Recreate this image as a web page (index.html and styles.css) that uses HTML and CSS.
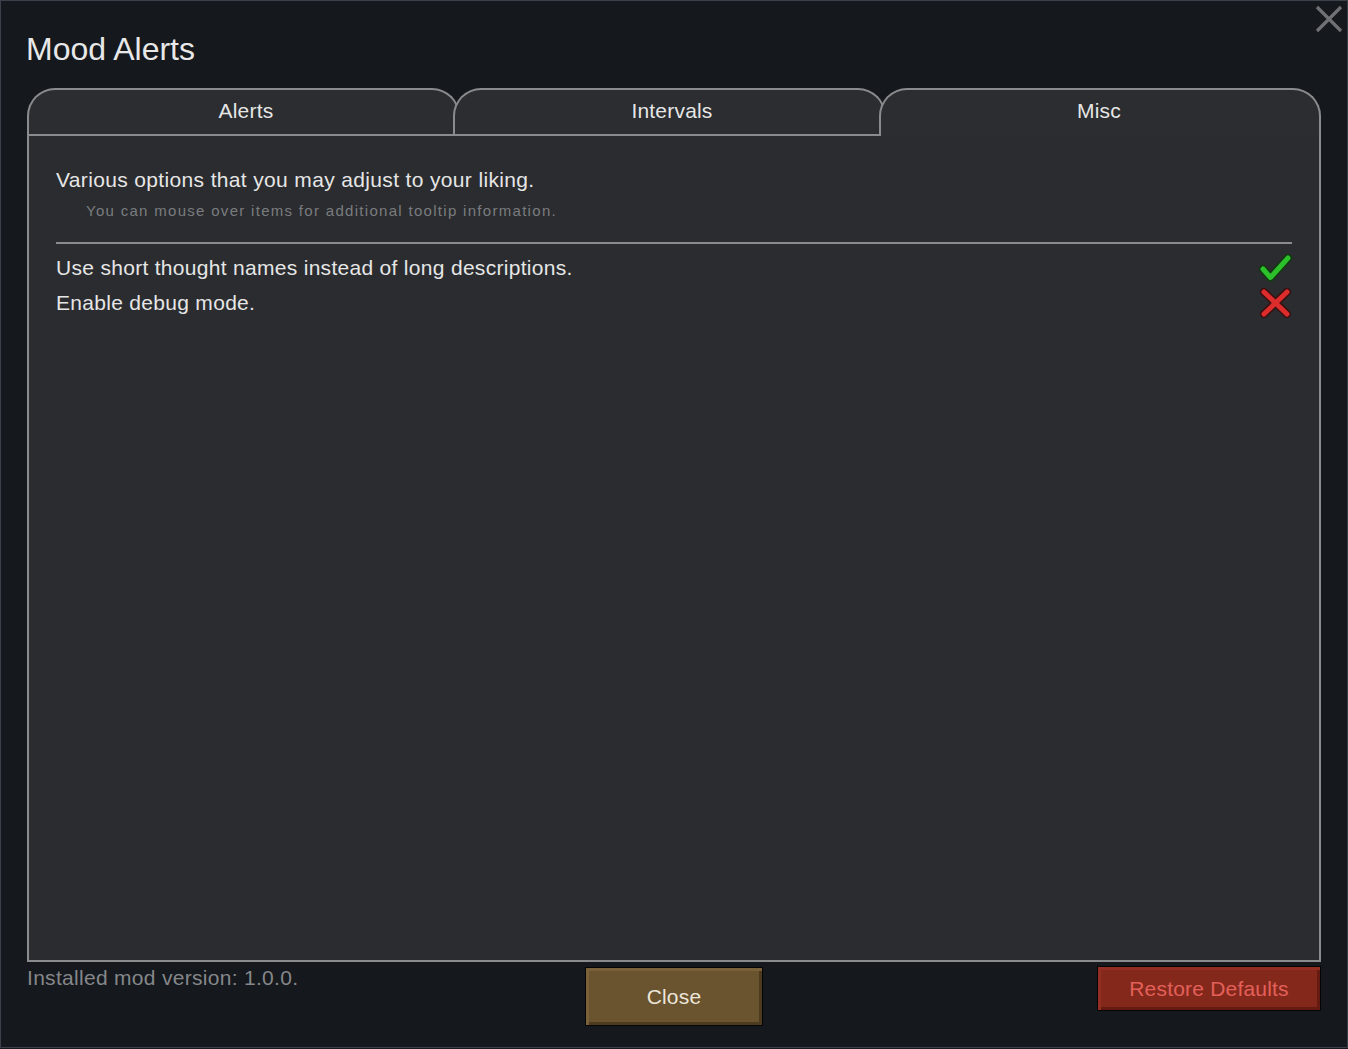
FILE: index.html
```html
<!DOCTYPE html>
<html>
<head>
<meta charset="utf-8">
<title>Mood Alerts</title>
<link rel="stylesheet" href="styles.css">
</head>
<body>
<div class="window">
  <button class="close-x" aria-label="Close">
    <svg width="28" height="28" viewBox="0 0 28 28"><path d="M2 2 L26 26 M26 2 L2 26" stroke="#6f7174" stroke-width="3.2" stroke-linecap="butt"/></svg>
  </button>
  <div class="titlebar"><h1 class="title">Mood Alerts</h1></div>
  <div class="tabs">
    <div class="tab">Alerts</div>
    <div class="tab">Intervals</div>
    <div class="tab active">Misc</div>
  </div>
  <div class="panel">
    <p class="intro">Various options that you may adjust to your liking.</p>
    <p class="hint">You can mouse over items for additional tooltip information.</p>
    <div class="divider"></div>
    <div class="row">
      <span>Use short thought names instead of long descriptions.</span>
      <svg class="icon" width="34" height="32" viewBox="0 0 34 32">
        <path d="M4 17 L11.5 25.5 L29 6" fill="none" stroke="#113a11" stroke-width="8" stroke-linecap="round" stroke-linejoin="round"/>
        <path d="M4 17 L11.5 25.5 L29 6" fill="none" stroke="#2cc12a" stroke-width="5" stroke-linecap="round" stroke-linejoin="round"/>
      </svg>
    </div>
    <div class="row">
      <span>Enable debug mode.</span>
      <svg class="icon" width="34" height="32" viewBox="0 0 34 32">
        <path d="M5 5 L28 27 M28 5 L5 27" fill="none" stroke="#3a1010" stroke-width="8" stroke-linecap="round"/>
        <path d="M5 5 L28 27 M28 5 L5 27" fill="none" stroke="#dd2c2c" stroke-width="5" stroke-linecap="round"/>
      </svg>
    </div>
  </div>
  <div class="footer">
    <div class="version">Installed mod version: 1.0.0.</div>
    <button class="btn btn-close">Close</button>
    <button class="btn btn-restore">Restore Defaults</button>
  </div>
</div>
</body>
</html>
```
FILE: styles.css
```css
* { box-sizing: border-box; }
html, body {
  margin: 0;
  padding: 0;
  background: #15181c;
}
body {
  font-family: "Liberation Sans", Arial, sans-serif;
  color: #e3e3e3;
}
.window {
  position: relative;
  width: 1348px;
  height: 1048px;
  border: 1px solid #3a414b;
  padding: 0 26px;
  display: flex;
  flex-direction: column;
  background: #15181c;
}
.close-x {
  position: absolute;
  top: 4px;
  right: 4px;
  width: 28px;
  height: 28px;
  padding: 0;
  border: 0;
  background: none;
  display: flex;
}
.titlebar {
  height: 87px;
  padding-top: 28px;
}
.title {
  margin: 0 0 0 -1px;
  font-size: 32px;
  line-height: 40px;
  font-weight: normal;
  color: #e8e8e8;
}
.tabs {
  height: 46px;
  display: flex;
}
.tab {
  position: relative;
  flex: 0 0 433px;
  height: 46px;
  border: 2px solid #8a8b8d;
  border-bottom: 0;
  border-radius: 28px 28px 0 0;
  background: #2b2d30;
  display: flex;
  align-items: center;
  justify-content: center;
  padding: 0 0 2px 5px;
  font-size: 21px;
  letter-spacing: 0.2px;
  color: #e6e6e6;
}
.tab + .tab { margin-left: -7px; }
.tab.active {
  flex: 1 1 auto;
  z-index: 2;
  height: 48px;
  margin-bottom: -2px;
  padding: 0 2px 4px 0;
}
.panel {
  height: 828px;
  border: 2px solid #8a8b8d;
  background: #2a2c2f;
  padding: 31px 27px 0 27px;
}
.intro {
  margin: 0;
  font-size: 21px;
  line-height: 26px;
  letter-spacing: 0.35px;
  color: #e6e6e6;
}
.hint {
  margin: 8px 0 0 30px;
  font-size: 15px;
  line-height: 20px;
  letter-spacing: 1.3px;
  color: #7a7c7f;
}
.divider {
  height: 2px;
  background: #8a8b8d;
  margin-top: 21px;
  margin-bottom: 6px;
}
.row {
  height: 35px;
  display: flex;
  align-items: center;
  justify-content: space-between;
  font-size: 21px;
  letter-spacing: 0.3px;
  color: #e6e6e6;
}
.icon { display: block; margin-right: -1px; }
.footer {
  height: 85px;
  display: grid;
  grid-template-columns: 1fr 178px 1fr;
  align-items: start;
  padding-top: 4px;
}
.version {
  font-size: 21px;
  line-height: 24px;
  color: #85878a;
  letter-spacing: 0.3px;
}
.btn {
  font-family: "Liberation Sans", Arial, sans-serif;
  font-size: 21px;
  letter-spacing: 0.2px;
  border: 1px solid #050505;
  padding: 0;
  cursor: pointer;
}
.btn-close {
  margin-top: 1px;
  width: 178px;
  height: 59px;
  background: #6a532f;
  color: #ece6da;
  box-shadow: inset 3px 3px 0 #7b6139, inset -3px -3px 0 #4d3b1f;
}
.btn-restore {
  justify-self: end;
  width: 224px;
  height: 45px;
  background: #84281c;
  color: #e3605a;
  box-shadow: inset 3px 3px 0 #932f22, inset -3px -3px 0 #651b12;
}
```
